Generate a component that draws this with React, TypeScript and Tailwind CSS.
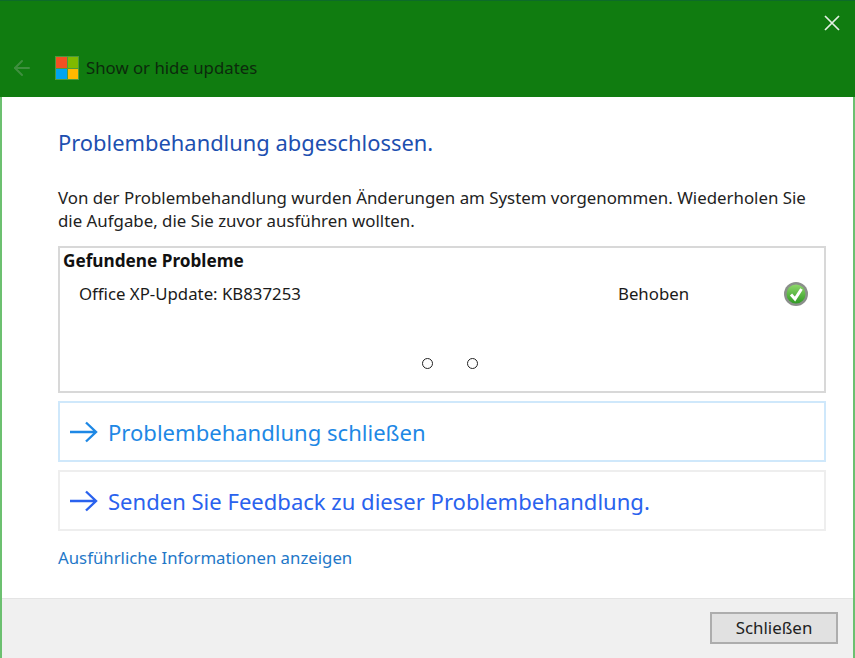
import { ArrowRight } from "lucide-react";

function LinkRow({ label, color, border }: { label: string; color: string; border: string }) {
  return (
    <div className={`h-[61px] border-2 ${border} flex items-center pl-[9px] ${color}`}>
      <svg width="29" height="24" viewBox="0 0 29 24" fill="none" stroke="currentColor" strokeWidth="2.4" className="mr-[10px] shrink-0">
        <path d="M1 12H27M17 2.5L27 12L17 21.5" />
      </svg>
      <span className="text-[22.05px] leading-none pt-[1px]">{label}</span>
    </div>
  );
}

function CheckBadge() {
  return (
    <svg width="26" height="26" viewBox="0 0 26 26">
      <defs>
        <linearGradient id="badge" x1="0" y1="0" x2="0" y2="1">
          <stop offset="0" stopColor="#8ed86a" />
          <stop offset="1" stopColor="#2f9a24" />
        </linearGradient>
      </defs>
      <circle cx="13" cy="13" r="12" fill="#8b8f8b" />
      <circle cx="13" cy="13" r="9.5" fill="url(#badge)" />
      <path d="M8 13.5L12 18L18.5 8" fill="none" stroke="#ffffff" strokeWidth="3" />
    </svg>
  );
}

export default function App() {
  return (
    <div className="w-[855px] h-[658px] flex flex-col overflow-hidden bg-white text-[#1a1a1a] font-['Noto_Sans','Open_Sans',sans-serif]">
      <header className="h-[97px] shrink-0 bg-[#107c10] border-t border-[#0d6b2a] flex flex-col">
        <div className="flex justify-end pt-[13px] pr-[14px]">
          <svg width="18" height="18" viewBox="0 0 18 18" stroke="#e4f0e4" strokeWidth="1.7">
            <path d="M2 2L16 16M16 2L2 16" />
          </svg>
        </div>
        <div className="flex items-center mt-[24px] pl-[10px]">
          <ArrowRight className="rotate-180 text-[#3f8f3f] mr-[21px]" size={24} strokeWidth={2} />
          <div className="w-[24px] h-[24px] grid grid-cols-2 gap-[1px] p-[1px] bg-[#4c9a3c]">
            <div className="bg-[#f25022]" />
            <div className="bg-[#7fba00]" />
            <div className="bg-[#00a4ef]" />
            <div className="bg-[#ffb900]" />
          </div>
          <span className="ml-[7px] text-[16.8px] leading-none text-[#0c2a0c]">Show or hide updates</span>
        </div>
      </header>

      <div className="flex-1 flex flex-col border-x-2 border-[#6cc070] min-h-0">
        <main className="flex-1 pl-[56px] pr-[27px]">
          <h1 className="mt-[31px] text-[21.9px] leading-[30px] text-[#1d4fb0]">Problembehandlung abgeschlossen.</h1>
          <p className="mt-[28px] text-[16.85px] leading-[23px] text-[#222222]">
            Von der Problembehandlung wurden Änderungen am System vorgenommen. Wiederholen Sie die Aufgabe, die Sie zuvor ausführen wollten.
          </p>

          <section className="relative mt-[14px] h-[147px] border-2 border-[#d8d8d8] pl-[3px] pt-[1px]">
            <h2 className="text-[17.2px] leading-[23px] font-bold text-[#111111]">Gefundene Probleme</h2>
            <div className="flex items-center h-[26px] mt-[9px] pl-[16px] pr-[15px] text-[16.8px]">
              <span className="flex-1">Office XP-Update: KB837253</span>
              <span className="w-[165px]">Behoben</span>
              <CheckBadge />
            </div>
            <span className="absolute left-[362px] top-[110px] w-[11px] h-[11px] rounded-full border border-[#222222]" />
            <span className="absolute left-[407px] top-[110px] w-[11px] h-[11px] rounded-full border border-[#222222]" />
          </section>

          <div className="mt-[8px] flex flex-col gap-[8px]">
            <LinkRow label="Problembehandlung schließen" color="text-[#1e88e5]" border="border-[#cfe8fb]" />
            <LinkRow label="Senden Sie Feedback zu dieser Problembehandlung." color="text-[#2a62ee]" border="border-[#eeeeee]" />
          </div>

          <a className="block mt-[15px] text-[16.8px] leading-[23px] text-[#1f78c8]">Ausführliche Informationen anzeigen</a>
        </main>

        <footer className="h-[60px] shrink-0 bg-[#f0f0f0] border-t border-[#e4e4e4] flex justify-end items-start pt-[13px] pr-[15px]">
          <button className="w-[128px] h-[32px] bg-[#e1e1e1] border-2 border-[#adadad] text-[16.9px] leading-none text-[#222222]">Schließen</button>
        </footer>
      </div>
    </div>
  );
}
